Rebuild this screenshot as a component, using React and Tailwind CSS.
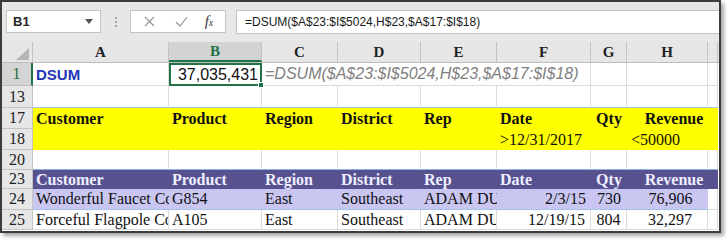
import React from "react";

const COLS = "grid grid-cols-[31px_136px_93px_76px_83px_76px_94px_36px_81px_10px]";
const serif = "font-['Liberation_Serif',serif]";
const sans = "font-['Liberation_Sans',Arial,sans-serif]";
const INNER = { gridTemplateColumns: "136px 93px 76px 83px 76px 94px 36px 81px 10px" };

function RowHead({ n, sel, h }) {
  return (
    <div
      className={`${serif} flex items-center justify-center text-[16px] leading-none border-b border-r ${
        sel ? "bg-[#d4d4d4] text-[#1e6b3f] border-r-[#217346] border-r-2 border-b-[#bdbdbd]" : "bg-[#e6e6e6] text-[#222] border-[#c4c4c4]"
      }`}
      style={{ height: h }}
    >
      {n}
    </div>
  );
}

function Cell({ children, cls = "" }) {
  return (
    <div className={`flex items-center overflow-hidden whitespace-nowrap px-[3px] leading-none ${cls}`}>{children}</div>
  );
}

const G = "border-r border-b border-[#dcdcdc]";
const T = `${serif} text-[16px] text-[#111]`;

export default function App() {
  const hdrs = ["A", "B", "C", "D", "E", "F", "G", "H", ""];
  return (
    <div className="w-[727px] h-[240px] bg-white">
      <div className="w-[721px] h-[233px] border-2 border-[#3c3c3c] shadow-[3px_3px_4px_rgba(0,0,0,0.35)] overflow-hidden flex flex-col bg-white">
        {/* formula bar */}
        <div className="h-[40px] bg-[#e7e7e7] flex items-start pt-[8px] shrink-0">
          <div className={`${sans} ml-[4px] w-[95px] h-[23px] bg-white border border-[#c3c3c3] flex items-center justify-between px-[6px] text-[13px] font-bold text-[#262626]`}>
            <span>B1</span>
            <svg width="8" height="5" viewBox="0 0 8 5" className="mr-[1px]">
              <path d="M0 0 L8 0 L4 5 Z" fill="#555" />
            </svg>
          </div>
          <div className="w-[29px] h-[23px] flex flex-col items-center justify-center gap-[2px]">
            <div className="w-[2px] h-[2px] bg-[#a5a5a5]" />
            <div className="w-[2px] h-[2px] bg-[#a5a5a5]" />
            <div className="w-[2px] h-[2px] bg-[#a5a5a5]" />
          </div>
          <div className="w-[96px] h-[23px] bg-white border border-[#c3c3c3] flex items-center">
            <div className="w-[36px] flex justify-center">
              <svg width="11" height="11" viewBox="0 0 11 11">
                <path d="M1 1 L10 10 M10 1 L1 10" stroke="#9a9a9a" strokeWidth="1.2" fill="none" />
              </svg>
            </div>
            <div className="w-[28px] flex justify-center">
              <svg width="13" height="11" viewBox="0 0 13 11">
                <path d="M1 6 L5 10 L12 1" stroke="#9a9a9a" strokeWidth="1.2" fill="none" />
              </svg>
            </div>
            <div className={`${serif} w-[28px] flex justify-center items-baseline italic text-[#3a3a3a]`}>
              <span className="text-[15px] leading-none">f</span>
              <span className="text-[10px] leading-none">x</span>
            </div>
          </div>
          <div className={`${sans} ml-[10px] flex-1 h-[24px] bg-white border border-[#c3c3c3] border-r-0 flex items-center pl-[8px] text-[12px] text-[#1a1a1a]`}>
            =DSUM($A$23:$I$5024,H$23,$A$17:$I$18)
          </div>
        </div>

        {/* column header row */}
        <div className={`${COLS} h-[21px] shrink-0 bg-[#e6e6e6] border-b border-[#bdbdbd]`}>
          <div className="relative border-r border-[#c4c4c4]">
            <svg width="13" height="12" viewBox="0 0 13 12" className="absolute right-[3px] bottom-[2px]">
              <path d="M13 0 L13 12 L0 12 Z" fill="#b5b5b5" />
            </svg>
          </div>
          {hdrs.map((h, i) => (
            <div
              key={i}
              className={`${serif} flex items-center justify-center font-bold text-[15px] leading-none ${
                h === "B"
                  ? "bg-[#d3d3d3] text-[#217346] border-b-2 border-[#217346] border-r border-r-[#c4c4c4]"
                  : "text-[#222] border-r border-[#c4c4c4]"
              }`}
            >
              {h}
            </div>
          ))}
        </div>

        {/* row 1 */}
        <div className={`${COLS} h-[23px] shrink-0`}>
          <RowHead n="1" sel h={23} />
          <Cell cls={`${G} ${sans} font-bold text-[15px] text-[#2336b5]`}>DSUM</Cell>
          <div className="relative border-2 border-[#217346] flex items-center justify-end pr-[2px] bg-white">
            <span className={`${sans} text-[16px] leading-none text-[#111]`}>37,035,431</span>
            <div className="absolute right-[-4px] bottom-[-4px] w-[6px] h-[6px] bg-[#217346] border border-white" />
          </div>
          <Cell cls={`col-span-4 ${G} ${sans} italic text-[16px] text-[#808080]`}>
            =DSUM($A$23:$I$5024,H$23,$A$17:$I$18)
          </Cell>
          <Cell cls={G} />
          <Cell cls={G} />
          <Cell cls={G} />
        </div>

        {/* row 13 */}
        <div className={`${COLS} h-[22px] shrink-0`}>
          <RowHead n="13" h={22} />
          {Array.from({ length: 9 }).map((_, i) => (
            <div key={i} className="border-r border-[#dcdcdc] border-b border-b-[#a9c7e8]" />
          ))}
        </div>

        {/* rows 17-18 yellow */}
        <div className={`${COLS} h-[21px] shrink-0`}>
          <RowHead n="17" h={21} />
          <div className="col-span-9 bg-[#ffff00] grid" style={INNER}>
            <Cell cls={`${T} font-bold`}>Customer</Cell>
            <Cell cls={`${T} font-bold`}>Product</Cell>
            <Cell cls={`${T} font-bold`}>Region</Cell>
            <Cell cls={`${T} font-bold`}>District</Cell>
            <Cell cls={`${T} font-bold`}>Rep</Cell>
            <Cell cls={`${T} font-bold`}>Date</Cell>
            <Cell cls={`${T} font-bold justify-center`}>Qty</Cell>
            <Cell cls={`${T} font-bold justify-center pl-[16px]`}>Revenue</Cell>
            <Cell />
          </div>
        </div>
        <div className={`${COLS} h-[21px] shrink-0`}>
          <RowHead n="18" h={21} />
          <div className="col-span-9 bg-[#ffff00] grid" style={INNER}>
            <Cell />
            <Cell />
            <Cell />
            <Cell />
            <Cell />
            <Cell cls={T}>&gt;12/31/2017</Cell>
            <Cell />
            <Cell cls={`${T} pl-[4px]`}>&lt;50000</Cell>
            <Cell />
          </div>
        </div>

        {/* row 20 */}
        <div className={`${COLS} h-[20px] shrink-0`}>
          <RowHead n="20" h={20} />
          {Array.from({ length: 9 }).map((_, i) => (
            <div key={i} className="border-r border-[#dcdcdc] border-b border-b-[#8fb4e3]" />
          ))}
        </div>

        {/* row 23 purple header */}
        <div className={`${COLS} h-[19px] shrink-0`}>
          <RowHead n="23" h={19} />
          <div className="col-span-9 bg-[#57528f] grid" style={INNER}>
            {["Customer", "Product", "Region", "District", "Rep", "Date"].map((t) => (
              <Cell key={t} cls={`${serif} font-bold text-[16px] text-[#eeeeff]`}>{t}</Cell>
            ))}
            <Cell cls={`${serif} font-bold text-[16px] text-[#eeeeff] justify-center`}>Qty</Cell>
            <Cell cls={`${serif} font-bold text-[16px] text-[#eeeeff] justify-center pl-[16px]`}>Revenue</Cell>
            <Cell />
          </div>
        </div>

        {/* row 24 */}
        <div className={`${COLS} h-[21px] shrink-0`}>
          <RowHead n="24" h={21} />
          <div className="col-span-8 bg-[#cac6f2] border-b border-[#9fc3ea] grid" style={{ gridTemplateColumns: "136px 93px 76px 83px 76px 94px 36px 81px" }}>
            <Cell cls={T}>Wonderful Faucet Co</Cell>
            <Cell cls={T}>G854</Cell>
            <Cell cls={T}>East</Cell>
            <Cell cls={T}>Southeast</Cell>
            <Cell cls={T}>ADAM DUNN</Cell>
            <Cell cls={`${T} justify-end pr-[5px]`}>2/3/15</Cell>
            <Cell cls={`${T} justify-center`}>730</Cell>
            <Cell cls={`${T} justify-center pl-[9px]`}>76,906</Cell>
          </div>
          <div className="border-r border-b border-[#dcdcdc]" />
        </div>

        {/* row 25 */}
        <div className={`${COLS} h-[20px] shrink-0`}>
          <RowHead n="25" h={20} />
          <Cell cls={`${G} ${T}`}>Forceful Flagpole Co</Cell>
          <Cell cls={`${G} ${T}`}>A105</Cell>
          <Cell cls={`${G} ${T}`}>East</Cell>
          <Cell cls={`${G} ${T}`}>Southeast</Cell>
          <Cell cls={`${G} ${T}`}>ADAM DUNN</Cell>
          <Cell cls={`${G} ${T} justify-end pr-[5px]`}>12/19/15</Cell>
          <Cell cls={`${G} ${T} justify-center`}>804</Cell>
          <Cell cls={`${G} ${T} justify-center pl-[9px]`}>32,297</Cell>
          <Cell cls={G} />
        </div>
      </div>
    </div>
  );
}
